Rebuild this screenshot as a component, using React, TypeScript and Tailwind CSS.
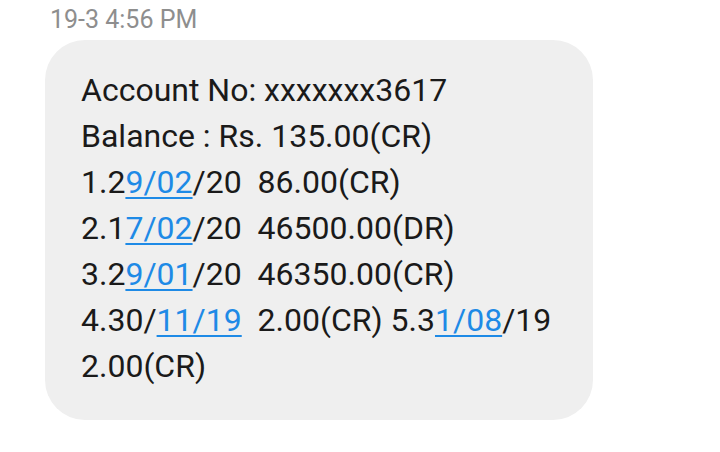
export default function App() {
  const link = "text-[#1e8ae6] underline decoration-[1.5px] underline-offset-[4px]";
  return (
    <div className="w-[720px] h-[452px] bg-white overflow-hidden" style={{ fontFamily: "Roboto, sans-serif" }}>
      <div className="pl-[50px] pt-[6px] text-[25px] leading-[28px] text-[#8e8e8e]">19-3 4:56 PM</div>
      <div className="ml-[45px] mt-[6px] w-[548px] h-[380px] rounded-[40px] bg-[#efefef] pl-[36px] pt-[27px]">
        <div className="text-[32px] leading-[46px] text-[#1a1a1a] whitespace-pre">
          <div>Account No: xxxxxxx3617</div>
          <div>Balance : Rs. 135.00(CR)</div>
          <div>1.2<span className={link}>9/02</span>/20  86.00(CR)</div>
          <div>2.1<span className={link}>7/02</span>/20  46500.00(DR)</div>
          <div>3.2<span className={link}>9/01</span>/20  46350.00(CR)</div>
          <div>4.30/<span className={link}>11/19</span>  2.00(CR) 5.3<span className={link}>1/08</span>/19</div>
          <div>2.00(CR)</div>
        </div>
      </div>
    </div>
  );
}
